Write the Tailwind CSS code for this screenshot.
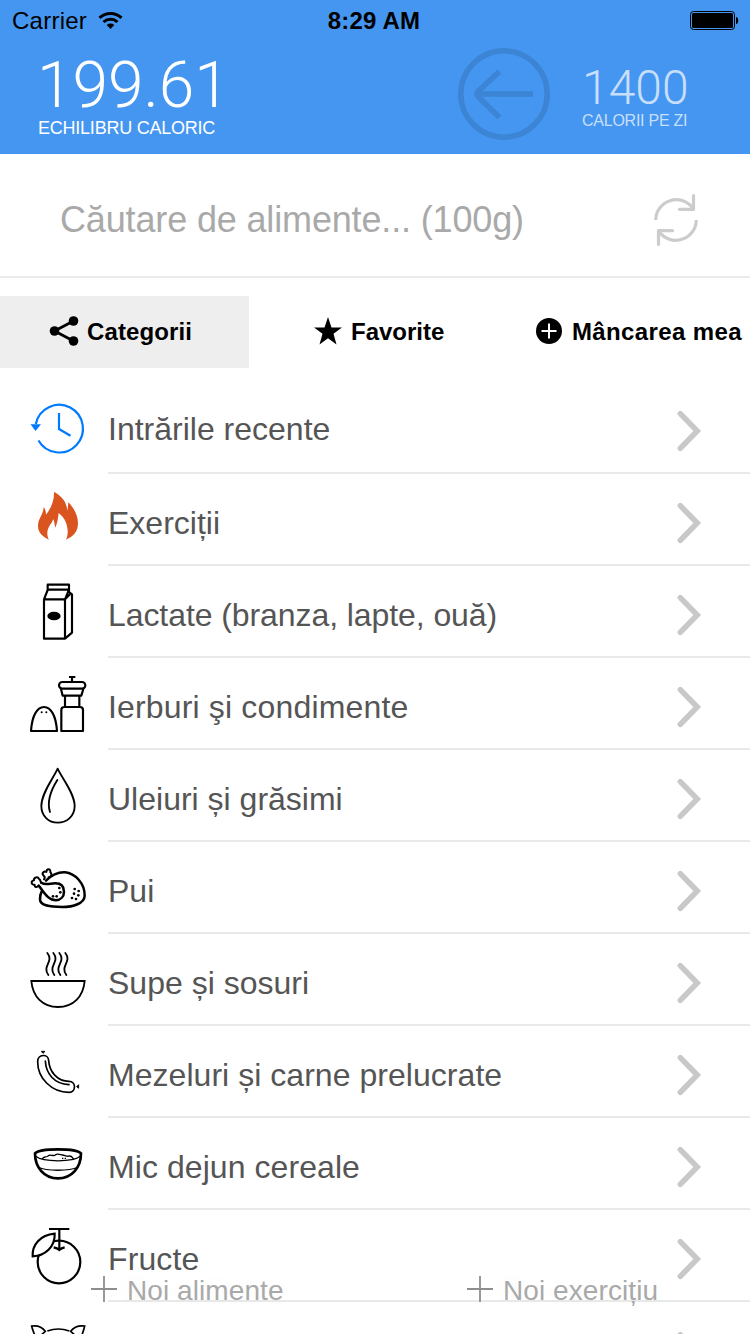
<!DOCTYPE html>
<html lang="ro">
<head>
<meta charset="utf-8">
<title>Echilibru caloric</title>
<script src="https://cdn.jsdelivr.net/npm/@tailwindcss/browser@4"></script>
</head>
<body class="bg-white">
<div class="relative flex h-[1334px] w-[750px] flex-col overflow-hidden bg-white font-['Liberation_Sans',Arial,sans-serif] leading-none whitespace-nowrap text-black">

  <header class="flex h-[154px] shrink-0 flex-col bg-[#4596f1]">
    <div class="grid h-[41px] grid-cols-3 items-center pr-[11px] pl-3 text-2xl leading-none">
      <div class="flex items-center gap-[11px]">
        <span class="tracking-[0.25px]">Carrier</span>
        <svg class="h-[19px] w-[26px]" viewBox="0 0 26 19" fill="none" stroke="#000" stroke-width="3"><path d="M1.500 6.800a16.200 16.200 0 0 1 22 0M5.500 11a10.400 10.400 0 0 1 14 0"/><path d="M8.700 14a5.600 5.600 0 0 1 7.600 0L12.500 18z" fill="#000" stroke="none"/></svg>
      </div>
      <span class="pr-[3px] text-center font-bold tracking-[0.2px]">8:29 AM</span>
      <svg class="h-5 w-[50px] justify-self-end" viewBox="0 0 50 20"><rect x="1.500" y=".5" width="44" height="18" rx="3" fill="none" stroke="#000"/><rect x="3" y="2" width="41" height="15" rx="1.500"/><path d="M47 6c3 0 3 7 0 7z"/></svg>
    </div>
    <div class="flex text-white">
      <div class="w-[458px] pt-[13px] pl-[38px]">
        <div class="-ml-px font-[Roboto,sans-serif] text-[64px] leading-none font-light">199.61</div>
        <div class="mt-px text-lg leading-none tracking-[-0.23px]">ECHILIBRU CALORIC</div>
      </div>
      <svg class="mt-[7px] h-[92px] w-[92px]" viewBox="0 0 92 92" fill="none" stroke="#3c84d4" stroke-width="5.500"><circle cx="46" cy="46" r="43.200"/><path d="M75 46H19M41.500 23.500 20.500 43Q17.500 46 20.500 49L41.500 69.500"/></svg>
      <div class="pt-[23px] pl-8 text-[#c7dffb]">
        <div class="font-[Roboto,sans-serif] text-5xl leading-none font-light">1400</div>
        <div class="mt-px text-base leading-none tracking-[-0.25px]">CALORII PE ZI</div>
      </div>
    </div>
  </header>

  <div class="flex h-[124px] shrink-0 items-center justify-between border-b-2 border-[#ebebeb] pr-[50px] pl-[60px]">
    <span class="pt-[10px] text-4xl leading-none tracking-[-0.15px] text-[#a9a9a9]">Căutare de alimente... (100g)</span>
    <svg class="mt-[10px] h-[56px] w-[48px]" viewBox="652 192 48 56" fill="none" stroke="#ccc" stroke-width="3.200" stroke-linecap="round" stroke-linejoin="round"><path stroke-linecap="butt" d="M655.700 220A20.500 20.500 0 0 1 693 208.500M696.300 220A20.500 20.500 0 0 1 659 231.500"/><path d="M693.500 195.500V209.300H679.500M658.500 244.500V230.700H672.500"/></svg>
  </div>

  <nav class="mt-[18px] flex h-[72px] shrink-0 text-2xl leading-none font-bold">
    <div class="flex w-[249px] items-center gap-2 bg-[#eee] pl-[49px]">
      <svg class="mb-[2px] h-[30px] w-[30px]" viewBox="0 0 30 30"><path d="M24.500 5 5.500 15 24.500 25" fill="none" stroke="#000" stroke-width="2.800"/><circle cx="5.500" cy="15" r="4.800"/><circle cx="24.500" cy="5" r="4.800"/><circle cx="24.500" cy="25" r="4.800"/></svg>
      <span class="tracking-[0.1px]">Categorii</span>
    </div>
    <div class="flex w-[287px] items-center gap-2 pl-[64px]">
      <svg class="mb-[2px] h-[30px] w-[30px]" viewBox="0 0 30 30"><path d="M15 1 18.500 11.500H29L20.500 17.800 23.500 28.500 15 22.200 6.500 28.500 9.500 17.800 1 11.500H11.500Z"/></svg>
      <span>Favorite</span>
    </div>
    <div class="flex items-center gap-[10px]">
      <svg class="mb-[2px] h-[26px] w-[26px]" viewBox="0 0 26 26"><circle cx="13" cy="13" r="13"/><path d="M13 5.500V20.500M5.500 13H20.500" stroke="#fff" stroke-width="2"/></svg>
      <span class="tracking-[0.37px]">Mâncarea mea</span>
    </div>
  </nav>

  <svg class="hidden"><symbol id="chev" viewBox="0 0 26 42"><path d="M4.300 3.700 21.200 21 4.300 38.300" fill="none" stroke="#c8c8c8" stroke-width="5.500" stroke-linecap="round"/></symbol></svg>

  <main class="mt-[14px] flex flex-col text-[32px] leading-none text-[#555]">
    <div class="flex h-[92px] shrink-0">
      <svg class="h-[92px] w-[108px]" viewBox="0 382 108 92"><g fill="none" stroke="#007aff" stroke-width="2.200"><path d="M35.800 424A23.800 23.800 0 1 1 38.500 440.500M59 413V429L70.500 435.800"/><path d="M30.500 424.300H41L35.500 431Z" fill="#007aff" stroke="none"/></g></svg>
      <div class="flex flex-1 items-center justify-between border-b-2 border-[#e9e9e9] pt-2 pr-12"><span class="pb-1">Intrările recente</span><svg class="h-[42px] w-[26px]"><use href="#chev"/></svg></div>
    </div>
    <div class="flex h-[92px] shrink-0">
      <svg class="h-[92px] w-[108px]" viewBox="0 474 108 92"><path transform="translate(20 390) scale(.3333)" fill="#d9541e" d="M102 305C125 318 140 335 142 362C144 355 144 345 145 337C158 350 174 372 174 400C174 425 160 440 138 449C148 430 145 390 116 369C114 385 112 400 106 413C104 405 103 395 100 387C96 400 82 410 82 430C82 438 84 445 87 449C68 440 54 428 54 408C54 385 70 375 71 351C76 358 78 366 78 374C92 355 103 335 102 305Z"/></svg>
      <div class="flex flex-1 items-center justify-between border-b-2 border-[#e9e9e9] pt-2 pr-12"><span>Exerciții</span><svg class="h-[42px] w-[26px]"><use href="#chev"/></svg></div>
    </div>
    <div class="flex h-[92px] shrink-0">
      <svg class="h-[92px] w-[108px]" viewBox="0 566 108 92"><g transform="translate(20 570) scale(.3333)" fill="none" stroke="#000" stroke-width="6.500" stroke-linejoin="round"><path d="M72 88H135V206H72ZM72 88 83 60V44H147V66L156 73V188L135 206M83 59H147L135 88M135 88 150 73"/><ellipse cx="102" cy="138" rx="20" ry="13" fill="#000" stroke="none"/></g></svg>
      <div class="flex flex-1 items-center justify-between border-b-2 border-[#e9e9e9] pt-2 pr-12"><span class="tracking-[-0.08px]">Lactate (branza, lapte, ouă)</span><svg class="h-[42px] w-[26px]"><use href="#chev"/></svg></div>
    </div>
    <div class="flex h-[92px] shrink-0">
      <svg class="h-[92px] w-[108px]" viewBox="0 658 108 92"><g transform="translate(20 570) scale(.3333)" fill="none" stroke="#000" stroke-width="6.500" stroke-linejoin="round"><path d="M33 483C36 440 50 411 72 411C94 411 108 440 111 483ZM147 321H166M156 321V335M123 357 128 377H184L190 357M135 378V411M178 378V411M124 483V420Q124 411 133 411H180Q189 411 189 420V483Z"/><rect x="117" y="336" width="79" height="20" rx="10"/><g fill="#000" stroke="none"><circle cx="65" cy="427" r="3"/><circle cx="79" cy="427" r="3"/></g></g></svg>
      <div class="flex flex-1 items-center justify-between border-b-2 border-[#e9e9e9] pt-2 pr-12"><span class="tracking-[0.16px]">Ierburi şi condimente</span><svg class="h-[42px] w-[26px]"><use href="#chev"/></svg></div>
    </div>
    <div class="flex h-[92px] shrink-0">
      <svg class="h-[92px] w-[108px]" viewBox="0 750 108 92"><g transform="translate(20 760) scale(.3333)" fill="none" stroke="#000" stroke-width="5.500" stroke-linejoin="round" stroke-linecap="round"><path d="M113 26C100 55 64 100 64 138C64 168 86 188 113 188C141 188 164 168 164 138C164 100 126 55 113 26ZM112 60C90 95 80 125 90 156"/></g></svg>
      <div class="flex flex-1 items-center justify-between border-b-2 border-[#e9e9e9] pt-2 pr-12"><span>Uleiuri și grăsimi</span><svg class="h-[42px] w-[26px]"><use href="#chev"/></svg></div>
    </div>
    <div class="flex h-[92px] shrink-0">
      <svg class="h-[92px] w-[108px]" viewBox="0 842 108 92"><g transform="translate(20 760) scale(.3333)" fill="none" stroke="#000" stroke-width="7.500" stroke-linejoin="round" stroke-linecap="round"><path d="M78 362C95 345 115 336 135 337C165 340 195 370 194 408C193 430 160 441 127 441C90 441 60 438 60 418C60 408 61 402 65 394M56 377C72 396 84 421 108 421C122 420 132 410 132 395C132 378 122 370 106 370C90 370 75 376 64 368"/><path stroke-width="6" d="M56 377C50 384 43 382 44 374C33 376 32 362 42 361C41 351 54 349 57 357C64 360 60 367 64 369M72 358C78 351 72 350 70 346C64 339 73 332 79 336C80 326 91 325 91 334C90 338 94 338 94 342C96 349 89 352 86 352"/><g fill="#000" stroke="none"><circle cx="118" cy="384" r="4"/><circle cx="121" cy="397" r="4"/><circle cx="110" cy="409" r="4"/><circle cx="99" cy="409" r="4"/><circle cx="164" cy="387" r="4"/><circle cx="176" cy="393" r="4"/><circle cx="162" cy="401" r="4"/><circle cx="175" cy="406" r="4"/><circle cx="156" cy="414" r="4"/><circle cx="168" cy="417" r="4"/></g></g></svg>
      <div class="flex flex-1 items-center justify-between border-b-2 border-[#e9e9e9] pt-2 pr-12"><span>Pui</span><svg class="h-[42px] w-[26px]"><use href="#chev"/></svg></div>
    </div>
    <div class="flex h-[92px] shrink-0">
      <svg class="h-[92px] w-[108px]" viewBox="0 934 108 92"><g transform="translate(20 940) scale(.3333)" fill="none" stroke="#000" stroke-width="5.500" stroke-linecap="round"><path d="M34 123H194C190 170 160 201 114 201C68 201 38 170 34 123Z"/><path d="M82 39C103 65 65 78 85 105M100 39C121 65 83 78 103 105M118 39C139 65 101 78 121 105M136 39C157 65 119 78 139 105"/></g></svg>
      <div class="flex flex-1 items-center justify-between border-b-2 border-[#e9e9e9] pt-2 pr-12"><span>Supe și sosuri</span><svg class="h-[42px] w-[26px]"><use href="#chev"/></svg></div>
    </div>
    <div class="flex h-[92px] shrink-0">
      <svg class="h-[92px] w-[108px]" viewBox="0 1026 108 92"><g transform="translate(20 940) scale(.3333)" fill="none" stroke="#000" stroke-width="5" stroke-linecap="round"><path d="M53 365C53 341 85 341 86 362C88 395 112 424 147 424C169 424 169 457 147 457C95 457 53 415 53 365ZM76 363C78 400 102 432 147 434"/><path stroke-width="3" fill="#000" d="M65 335 69 340 74 335ZM175 435 170 440 175 444Z"/></g></svg>
      <div class="flex flex-1 items-center justify-between border-b-2 border-[#e9e9e9] pt-2 pr-12"><span class="tracking-[0.04px]">Mezeluri și carne prelucrate</span><svg class="h-[42px] w-[26px]"><use href="#chev"/></svg></div>
    </div>
    <div class="flex h-[92px] shrink-0">
      <svg class="h-[92px] w-[108px]" viewBox="0 1118 108 92"><g transform="translate(20 1130) scale(.3333)" fill="none" stroke="#000" stroke-width="4"><path stroke-width="8" d="M45 70C45 112 72 145 114 145C156 145 183 112 183 70C168 54 60 54 45 70Z"/><path d="M47 79C70 97 158 97 181 79M54 111C80 124 148 124 174 111M66 89C70 76 80 84 84 78C90 71 100 80 106 75C112 68 124 76 128 75C134 75 140 81 148 78C156 77 158 85 163 89"/><path d="M126 85H130M134 85H138"/></g></svg>
      <div class="flex flex-1 items-center justify-between border-b-2 border-[#e9e9e9] pt-2 pr-12"><span class="tracking-[0.07px]">Mic dejun cereale</span><svg class="h-[42px] w-[26px]"><use href="#chev"/></svg></div>
    </div>
    <div class="flex h-[92px] shrink-0">
      <svg class="h-[92px] w-[108px]" viewBox="0 1210 108 92"><g transform="translate(20 1130) scale(.3333)" fill="none" stroke="#000" stroke-width="6.500"><circle cx="117" cy="396" r="64"/><path fill="#fff" d="M104 311C60 315 36 345 38 379C75 378 106 350 104 311Z"/><path d="M87 297H148M118 297V358M101 352Q112 354 118 360Q124 354 134 352"/></g></svg>
      <div class="flex flex-1 items-center justify-between border-b-2 border-[#e9e9e9] pt-2 pr-12"><span class="tracking-[0.1px]">Fructe</span><svg class="h-[42px] w-[26px]"><use href="#chev"/></svg></div>
    </div>
    <div class="flex h-[92px] shrink-0">
      <svg class="h-[92px] w-[108px]" viewBox="0 1302 108 92"><g transform="translate(20 1130) scale(.3333)" fill="none" stroke="#000" stroke-width="5"><path d="M48 625C42 610 37 598 35 588C50 586 66 590 76 604L58 620M182 625C188 610 192 598 194 588C178 586 162 590 152 604L170 620M82 603C104 595 126 595 148 603"/></g></svg>
      <div class="flex flex-1 items-center justify-end pt-2 pr-12"><svg class="h-[42px] w-[26px]"><use href="#chev"/></svg></div>
    </div>
  </main>

  <div class="absolute top-[1276px] left-[91px] flex gap-[9px] text-[28px] leading-none tracking-[0.08px] text-[#a9a9a9] [text-shadow:0_0_20px_rgba(0,0,0,0.06)]">
    <svg class="h-[26px] w-[27px]" viewBox="0 0 27 26"><path d="M0 13H26M13 0V26" stroke="#8e8e8e" stroke-width="1.800"/></svg>
    <span class="pt-px">Noi alimente</span>
  </div>
  <div class="absolute top-[1276px] left-[467px] flex gap-[9px] text-[28px] leading-none tracking-[0.08px] text-[#a9a9a9] [text-shadow:0_0_20px_rgba(0,0,0,0.06)]">
    <svg class="h-[26px] w-[27px]" viewBox="0 0 27 26"><path d="M0 13H26M13 0V26" stroke="#8e8e8e" stroke-width="1.800"/></svg>
    <span class="pt-px">Noi exercițiu</span>
  </div>
</div>
</body>
</html>
